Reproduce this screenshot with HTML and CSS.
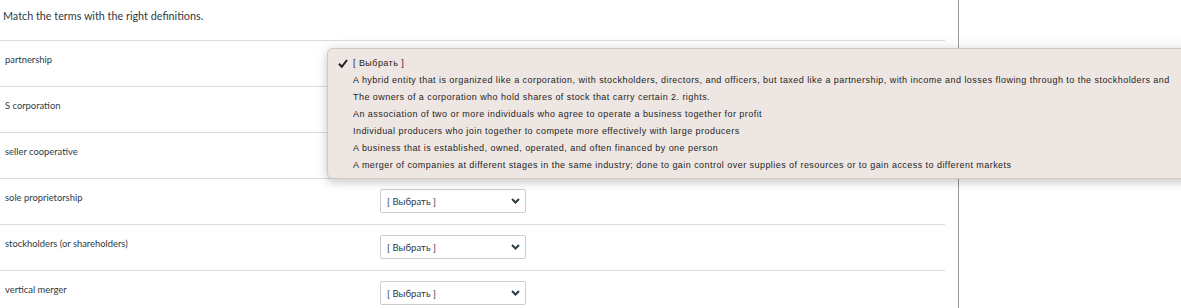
FILE: index.html
```html
<!DOCTYPE html>
<html lang="en">
<head>
  <meta charset="UTF-8">
  <meta name="viewport" content="width=device-width, initial-scale=1.0">
  <title>Matching question</title>
  <link rel="stylesheet" href="styles.css">
</head>
<body>
  <div class="main">
    <p class="intro">Match the terms with the right definitions.</p>

    <div class="matches">
      <div class="row">
        <span class="term">partnership</span>
        <div class="select"><span>[ Выбрать ]</span><svg width="9" height="6" viewBox="0 0 9 6"><path d="M1 1l3.5 3.5L8 1" fill="none" stroke="#2d3b45" stroke-width="2"/></svg></div>
      </div>
      <div class="row">
        <span class="term">S corporation</span>
        <div class="select"><span>[ Выбрать ]</span><svg width="9" height="6" viewBox="0 0 9 6"><path d="M1 1l3.5 3.5L8 1" fill="none" stroke="#2d3b45" stroke-width="2"/></svg></div>
      </div>
      <div class="row">
        <span class="term">seller cooperative</span>
        <div class="select"><span>[ Выбрать ]</span><svg width="9" height="6" viewBox="0 0 9 6"><path d="M1 1l3.5 3.5L8 1" fill="none" stroke="#2d3b45" stroke-width="2"/></svg></div>
      </div>
      <div class="row">
        <span class="term">sole proprietorship</span>
        <div class="select"><span>[ Выбрать ]</span><svg width="9" height="6" viewBox="0 0 9 6"><path d="M1 1l3.5 3.5L8 1" fill="none" stroke="#2d3b45" stroke-width="2"/></svg></div>
      </div>
      <div class="row">
        <span class="term">stockholders (or shareholders)</span>
        <div class="select"><span>[ Выбрать ]</span><svg width="9" height="6" viewBox="0 0 9 6"><path d="M1 1l3.5 3.5L8 1" fill="none" stroke="#2d3b45" stroke-width="2"/></svg></div>
      </div>
      <div class="row">
        <span class="term">vertical merger</span>
        <div class="select"><span>[ Выбрать ]</span><svg width="9" height="6" viewBox="0 0 9 6"><path d="M1 1l3.5 3.5L8 1" fill="none" stroke="#2d3b45" stroke-width="2"/></svg></div>
      </div>
    </div>
  </div>

  <!-- open native select menu for the first row -->
  <ul class="menu">
    <li class="checked"><svg class="check" width="10" height="9" viewBox="0 0 10 9"><path d="M1 4.8l2.8 3L9 1" fill="none" stroke="#1e1e1e" stroke-width="2"/></svg>[ Выбрать ]</li>
    <li>A hybrid entity that is organized like a corporation, with stockholders, directors, and officers, but taxed like a partnership, with income and losses flowing through to the stockholders and</li>
    <li>The owners of a corporation who hold shares of stock that carry certain 2. rights.</li>
    <li>An association of two or more individuals who agree to operate a business together for profit</li>
    <li>Individual producers who join together to compete more effectively with large producers</li>
    <li>A business that is established, owned, operated, and often financed by one person</li>
    <li>A merger of companies at different stages in the same industry; done to gain control over supplies of resources or to gain access to different markets</li>
  </ul>
</body>
</html>
```

FILE: styles.css
```css
body {
  margin: 0;
  overflow: hidden;
  background: #fff;
  font-family: Lato, "Liberation Sans", sans-serif;
  color: #2d3b45;
}
.main {
  width: 958px;
  min-height: 100vh;
  border-right: 1px solid #9b9b9b;
}
.intro {
  margin: 0 0 17px;
  padding: 8px 0 0 3px;
  font-size: 10.8px;
  line-height: 15px;
}
.matches {
  width: 945px;
}
.row {
  display: grid;
  grid-template-columns: 380px 146px;
  align-items: start;
  height: 45px;
  border-top: 1px solid #dcdcdc;
}
.term {
  padding: 13px 0 0 5px;
  font-size: 9.4px;
  line-height: 12px;
}
.select {
  display: flex;
  align-items: center;
  justify-content: space-between;
  box-sizing: border-box;
  height: 24px;
  margin-top: 10px;
  padding: 0 5px 0 6px;
  border: 1px solid #c7cdd1;
  border-radius: 2px;
  font-size: 9.6px;
}
.menu {
  position: absolute;
  left: 327px;
  top: 48px;
  width: 900px;
  margin: 0;
  padding: 6px 0 4px;
  list-style: none;
  background: #eee6e2;
  border: 1px solid #cfc9c6;
  border-radius: 6px;
  box-shadow: 0 0 14px rgba(0, 0, 0, 0.1), 0 4px 8px rgba(0, 0, 0, 0.14);
  font-family: "Liberation Sans", Arial, sans-serif;
  font-size: 9px;
  letter-spacing: 0.45px;
  color: #1e1e1e;
}
.menu li {
  position: relative;
  height: 17px;
  line-height: 17px;
  padding-left: 25px;
  white-space: nowrap;
}
.check {
  position: absolute;
  left: 10px;
  top: 4px;
}
```
